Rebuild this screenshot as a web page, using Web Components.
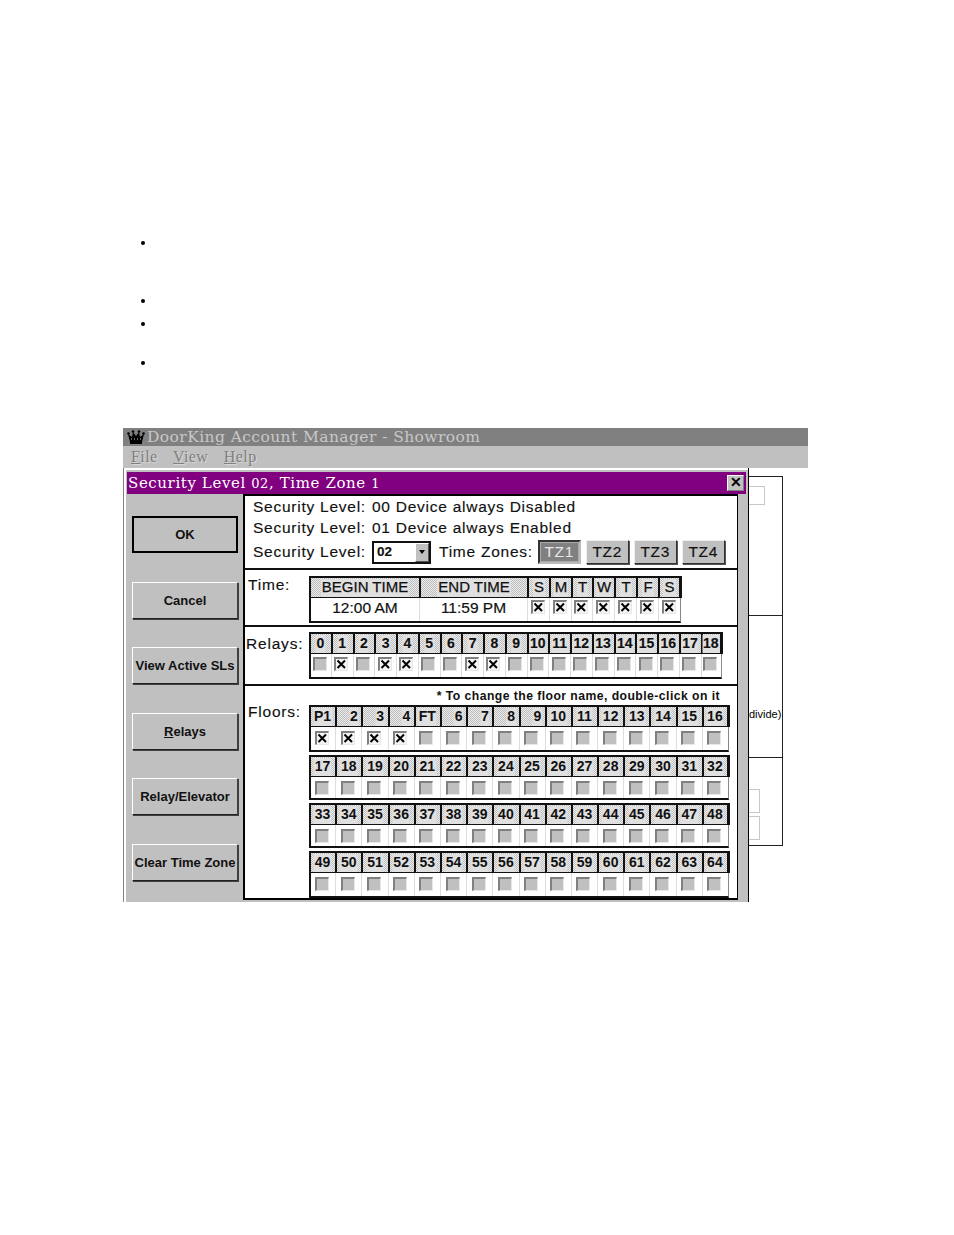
<!DOCTYPE html>
<html>
<head>
<meta charset="utf-8">
<title>DoorKing Account Manager</title>
<style>
  html, body { margin: 0; padding: 0; background: #fff; }
  body { width: 954px; height: 1235px; overflow: hidden; font-family: "Liberation Sans", Arial, sans-serif; }
</style>
</head>
<body>
<dk-bullets></dk-bullets>
<dk-app>
  <dk-dialog>
    <dk-btn slot="buttons" strong>OK</dk-btn>
    <dk-btn slot="buttons">Cancel</dk-btn>
    <dk-btn slot="buttons">View Active SLs</dk-btn>
    <dk-btn slot="buttons"><u>R</u>elays</dk-btn>
    <dk-btn slot="buttons">Relay/Elevator</dk-btn>
    <dk-btn slot="buttons">Clear Time Zone</dk-btn>

    <dk-levels slot="panel"></dk-levels>
    <dk-section slot="panel" label="Time:" height="57" top="6" drop="0" indent="3">
      <dk-grid widths="110,108,22,22,21,22,22,22,22" head="BEGIN TIME,END TIME,S,M,T,W,T,F,S" cells="12:00 AM,11:59 PM,x,x,x,x,x,x,x" wide lift="3"></dk-grid>
    </dk-section>
    <dk-section slot="panel" label="Relays:" height="59" top="5" drop="3" indent="1">
      <dk-grid count="19" width="21.75" trim="1.5" start="0" checked="1,3,4,7,8" lift="2"></dk-grid>
    </dk-section>
    <dk-floors slot="panel"></dk-floors>
  </dk-dialog>
</dk-app>

<script>
// dithered face used by all the grid headers
const DITHER = 'repeating-conic-gradient(#bcbcbc 0 25%, #ececec 0 50%) 0 0 / 2px 2px';

class DkBullets extends HTMLElement {
    constructor() {
        super();
        this.attachShadow({ mode: 'open' }).innerHTML = `
          <style>
            :host { display: block; height: 428px; box-sizing: border-box; padding: 241px 0 0 141px; }
            i { display: block; width: 4px; height: 4px; border-radius: 50%; background: #000; }
            i:nth-of-type(2) { margin-top: 54px; }
            i:nth-of-type(3) { margin-top: 19px; }
            i:nth-of-type(4) { margin-top: 35px; }
          </style>
          <i></i><i></i><i></i><i></i>`;
    }
}

class DkApp extends HTMLElement {
    constructor() {
        super();
        this.attachShadow({ mode: 'open' }).innerHTML = `
          <style>
            :host { display: block; width: 685px; margin-left: 123px; }
            .title { height: 18px; background: #808080; display: flex; align-items: center; gap: 2px; padding-left: 4px;
              color: #c8c8c8; font: 15.5px "DejaVu Serif", serif; letter-spacing: .42px; white-space: nowrap; }
            .menu { height: 22px; background: #c0c0c0; display: flex; padding-left: 8px; color: #808080;
              font: 16px "Liberation Serif", serif; align-items: center; text-shadow: 1px 1px 0 #d8d8d8; }
            .menu span { margin-right: 15.5px; letter-spacing: .4px; }
            .main { display: flex; }
            .behind { width: 34px; box-sizing: border-box; margin-top: 8px; height: 370px; border-top: 1px solid #222; border-right: 1px solid #222;
              display: flex; flex-direction: column; }
            .cell { box-sizing: border-box; border-bottom: 1px solid #222; }
            .c1 { height: 139px; padding-top: 9px; }
            .c2 { height: 142px; padding-top: 92px; font-size: 11px; white-space: nowrap; }
            .c3 { height: 88px; padding-top: 31px; }
            .input { box-sizing: border-box; border: 1px solid #c8c8c8; border-left: 0; }
            .c1 .input { width: 16px; height: 19px; }
            .c3 .input { width: 11px; height: 24px; margin-bottom: 3px; }
          </style>
          <div class="title">
            <svg width="18" height="14" viewBox="0 0 18 14">
              <path d="M3 12 L1 4 L5 7 L6 2 L9 6 L12 2 L13 7 L17 4 L15 12 Z" fill="#000"/>
              <rect x="3" y="12" width="12" height="2" fill="#000"/>
              <circle cx="1.5" cy="3.5" r="1.3" fill="#000"/><circle cx="6" cy="1.5" r="1.3" fill="#000"/>
              <circle cx="12" cy="1.5" r="1.3" fill="#000"/><circle cx="16.5" cy="3.5" r="1.3" fill="#000"/>
              <path d="M4 9h10" stroke="#c8c8c8" stroke-dasharray="1 2"/>
            </svg>
            <span>DoorKing Account Manager - Showroom</span>
          </div>
          <div class="menu"><span><u>F</u>ile</span><span><u>V</u>iew</span><span><u>H</u>elp</span></div>
          <div class="main">
            <slot></slot>
            <div class="behind">
              <div class="cell c1"><div class="input"></div></div>
              <div class="cell c2">divide)</div>
              <div class="cell c3"><div class="input"></div><div class="input"></div></div>
            </div>
          </div>`;
    }
}

class DkDialog extends HTMLElement {
    constructor() {
        super();
        this.attachShadow({ mode: 'open' }).innerHTML = `
          <style>
            :host { display: block; width: 626px; height: 434px; box-sizing: border-box; padding-left: 1px; border-left: 1px solid #808080;
              border-right: 1px solid #000; flex: none; }
            .wrap { height: 100%; box-sizing: border-box; margin-left: 1px; background: linear-gradient(#fff 2px, #c0c0c0 2px); display: flex; flex-direction: column; padding-top: 4px; padding-bottom: 2px; }
            .bar { height: 22px; margin-left: 1px; margin-right: 2px; flex: none; background: #800080; color: #fff; display: flex; align-items: center; justify-content: space-between;
              font: 15px "DejaVu Serif", serif; letter-spacing: .6px; padding: 0 2px 0 1px; white-space: nowrap; box-sizing: border-box; }
            .bar small { font-size: 13px; }
            .close { width: 17px; height: 16px; box-sizing: border-box; background: #c0c0c0; border: 1px solid; border-color: #fff #808080 #808080 #fff;
              font: bold 14px/13px "Liberation Sans", sans-serif; letter-spacing: 0; color: #000; text-align: center; }
            .body { flex: 1; display: flex; min-height: 0; }
            .buttons { width: 117px; box-sizing: border-box; flex: none; padding: 22px 0 0 6px; display: flex; flex-direction: column; gap: 28.6px; }
            .panel { width: 495px; flex: none; box-sizing: border-box; background: #fff; border: 2px solid #000; border-right-width: 1px; display: flex; flex-direction: column; }
          </style>
          <div class="wrap">
            <div class="bar"><span>Security Level <small>02</small>, Time Zone <small>1</small></span><span class="close">✕</span></div>
            <div class="body">
              <div class="buttons"><slot name="buttons"></slot></div>
              <div class="panel"><slot name="panel"></slot></div>
            </div>
          </div>`;
    }
}

class DkBtn extends HTMLElement {
    constructor() {
        super();
        this.attachShadow({ mode: 'open' }).innerHTML = `
          <style>
            :host { display: flex; width: 106px; height: 37px; box-sizing: border-box; align-items: center; justify-content: center;
              background: #c0c0c0; border: 1px solid #808080; border-color: #fff #404040 #202020 #fff;
              box-shadow: 1px 1px 0 #404040; white-space: nowrap; color: #111;
              font: bold 13px "Liberation Sans", sans-serif; }
            :host([strong]) { border: 2px solid #000; box-shadow: none; }
          </style>
          <slot></slot>`;
    }
}

class DkCheck extends HTMLElement {
    constructor() {
        super();
        const on = this.hasAttribute('on');
        this.attachShadow({ mode: 'open' }).innerHTML = `
          <style>
            :host { display: block; width: 14px; height: 14px; box-sizing: border-box; background: ${on ? '#f4f4f4' : '#c0c0c0'};
              border-left: 2px solid #808080; border-top: 2px solid #808080; border-right: 1px solid #e8e8e8; border-bottom: 1px solid #e8e8e8; }
            svg { display: block; }
          </style>
          ${on ? '<svg width="11" height="11" viewBox="0 0 11 11"><path d="M1.5 1.5 L9 9 M9 1.5 L1.5 9" stroke="#000" stroke-width="2"/></svg>' : ''}`;
    }
}

class DkGrid extends HTMLElement {
    constructor() {
        super();
        this.attachShadow({ mode: 'open' });
    }
    connectedCallback() {
        const count = +this.getAttribute('count') || 0;
        let widths, head, cells;
        if (count) {
            const start = +this.getAttribute('start') || 0;
            const names = this.getAttribute('names');
            const checked = (this.getAttribute('checked') || '').split(',');
            widths = Array(count).fill(+this.getAttribute('width'));
            widths[count - 1] -= +this.getAttribute('trim') || 0;
            head = names ? names.split(',') : widths.map((_, i) => String(start + i));
            cells = widths.map((_, i) => checked.includes(String(i)) ? 'x' : 'o');
        } else {
            widths = this.getAttribute('widths').split(',').map(Number);
            head = this.getAttribute('head').split(',');
            cells = this.getAttribute('cells').split(',');
        }
        const cols = widths.map(w => w + 'px').join(' ');
        const shift = this.hasAttribute('shift');
        const lift = this.getAttribute('lift') || 1;
        this.shadowRoot.innerHTML = `
          <style>
            :host { display: block; width: max-content; letter-spacing: 0; }
            .grid { display: grid; grid-template-columns: ${cols}; grid-template-rows: 22px ${this.getAttribute('rowh') || 23}px;
              border-bottom: 2px solid #111; border-right: 1px solid #888; }
            .h { box-sizing: border-box; border-left: 2px solid #111; border-top: 2px solid #111; border-bottom: 1px solid #111; background: ${DITHER};
              display: flex; align-items: stretch; padding: 1px 0 0 0; min-width: 0; }
            .h:nth-of-type(${widths.length}) { border-right: 3px solid #111; margin-right: -2px; }
            .h span { margin: 0 auto; padding: 0 1px; background: #e0e0e0; color: #111; white-space: nowrap;
              font: bold 14px/16px "Liberation Sans", sans-serif; transform: translateX(-.5px); }
            .h span.wide { font-weight: normal; font-size: 15px; -webkit-text-stroke: .25px #111; transform: translateX(0); }
            .h span.s { margin: 0 2px 0 auto; }
            .c { box-sizing: border-box; border-left: 1px solid #ddd; display: flex; align-items: center; justify-content: center; background: #fff;
              font: 15.5px "Liberation Sans", sans-serif; -webkit-text-stroke: .2px #111; color: #111; white-space: nowrap; padding-bottom: 3px; }
            .c:nth-of-type(${widths.length + 1}) { border-left: 2px solid #111; }
            .c:has(dk-check) { padding-bottom: 0; }
            dk-check { transform: translate(-1px, -${lift}px); }
          </style>
          <div class="grid">
            ${head.map(t => `<div class="h"><span class="${this.hasAttribute('wide') ? 'wide' : ''}${shift && t.length === 1 ? ' s' : ''}">${t}</span></div>`).join('')}
            ${cells.map(c => `<div class="c">${c === 'x' ? '<dk-check on></dk-check>' : c === 'o' ? '<dk-check></dk-check>' : c}</div>`).join('')}
          </div>`;
    }
}

class DkSection extends HTMLElement {
    constructor() {
        super();
        this.attachShadow({ mode: 'open' });
    }
    connectedCallback() {
        this.shadowRoot.innerHTML = `
          <style>
            :host { display: flex; box-sizing: border-box; height: ${this.getAttribute('height')}px; border-top: 2px solid #111;
              padding-top: ${this.getAttribute('top')}px; font: 15.5px "Liberation Sans", sans-serif; letter-spacing: .8px; color: #111; -webkit-text-stroke: .15px #111; }
            .label { width: 64px; flex: none; box-sizing: border-box; padding: ${this.getAttribute('drop')}px 0 0 ${this.getAttribute('indent')}px; line-height: 17px; white-space: nowrap; }
          </style>
          <div class="label">${this.getAttribute('label')}</div><slot></slot>`;
    }
}

class DkLevels extends HTMLElement {
    constructor() {
        super();
        this.attachShadow({ mode: 'open' }).innerHTML = `
          <style>
            :host { display: grid; grid-template-columns: 119px auto; grid-template-rows: 21px 22px 26px; height: 72px; box-sizing: border-box; padding: 0 0 0 8px;
              font: 15.5px/20px "Liberation Sans", sans-serif; letter-spacing: .75px; -webkit-text-stroke: .15px #111; color: #111; white-space: nowrap; align-items: center; }
            .pick { display: flex; align-items: center; }
            .combo { width: 59px; height: 23px; box-sizing: border-box; border: 2px solid #111; display: flex; justify-content: space-between; padding-left: 3px;
              font: bold 13.5px/18px "Liberation Sans", sans-serif; letter-spacing: 0; margin-right: 8px; }
            .arrow { width: 14px; box-sizing: border-box; background: #c0c0c0; border: 1px solid; border-color: #fff #555 #555 #fff; display: flex; align-items: center; justify-content: center; }
            .arrow i { border: 3px solid transparent; border-top: 4px solid #000; border-bottom: 0; }
            .zones { margin-right: 5px; }
            .tz { width: 43px; height: 24px; box-sizing: border-box; background: #c0c0c0; border: 1px solid; border-color: #eee #333 #333 #eee; box-shadow: 1px 1px 0 #555;
              text-align: center; font: 15.5px/22px "Liberation Sans", sans-serif; margin-right: 5px; }
            .tz.on { background: #808080; color: #e8e8e8; -webkit-text-stroke: 0; border: 2px solid #444; border-color: #333 #bbb #bbb #333; outline: 1px solid #aaa; outline-offset: -3px; line-height: 20px; box-shadow: none; }
          </style>
          <span>Security Level:</span><span>00 Device always Disabled</span>
          <span>Security Level:</span><span>01 Device always Enabled</span>
          <span>Security Level:</span>
          <div class="pick">
            <div class="combo">02<span class="arrow"><i></i></span></div>
            <span class="zones">Time Zones:</span>
            <div class="tz on">TZ1</div><div class="tz">TZ2</div><div class="tz">TZ3</div><div class="tz">TZ4</div>
          </div>`;
    }
}

class DkFloors extends HTMLElement {
    constructor() {
        super();
        const range = (a, b) => Array.from({ length: b - a + 1 }, (_, i) => a + i).join(',');
        this.attachShadow({ mode: 'open' }).innerHTML = `
          <style>
            :host { display: flex; flex: 1; box-sizing: border-box; border-top: 2px solid #111; flex-direction: column; color: #111; }
            .note { text-align: right; padding: 2px 17px 0 0; font: bold 12.2px/16px "Liberation Sans", sans-serif; letter-spacing: .45px; height: 19px; box-sizing: border-box; white-space: nowrap; }
            .row { display: flex; }
            .label { width: 64px; flex: none; box-sizing: border-box; padding-left: 3px; font: 15.5px/17px "Liberation Sans", sans-serif; letter-spacing: .8px; -webkit-text-stroke: .15px #111; margin-top: -2px; }
            .groups { display: flex; flex-direction: column; gap: 3px; }
          </style>
          <div class="note">* To change the floor name, double-click on it</div>
          <div class="row">
            <div class="label">Floors:</div>
            <div class="groups">
              <dk-grid count="16" width="26.2" names="P1,2,3,4,FT,6,7,8,9,10,11,12,13,14,15,16" checked="0,1,2,3" shift></dk-grid>
              <dk-grid count="16" width="26.2" names="${range(17, 32)}" rowh="21" lift="0"></dk-grid>
              <dk-grid count="16" width="26.2" names="${range(33, 48)}" rowh="21" lift="0"></dk-grid>
              <dk-grid count="16" width="26.2" names="${range(49, 64)}"></dk-grid>
            </div>
          </div>`;
    }
}

customElements.define('dk-bullets', DkBullets);
customElements.define('dk-app', DkApp);
customElements.define('dk-dialog', DkDialog);
customElements.define('dk-btn', DkBtn);
customElements.define('dk-check', DkCheck);
customElements.define('dk-grid', DkGrid);
customElements.define('dk-section', DkSection);
customElements.define('dk-levels', DkLevels);
customElements.define('dk-floors', DkFloors);
</script>
</body>
</html>
